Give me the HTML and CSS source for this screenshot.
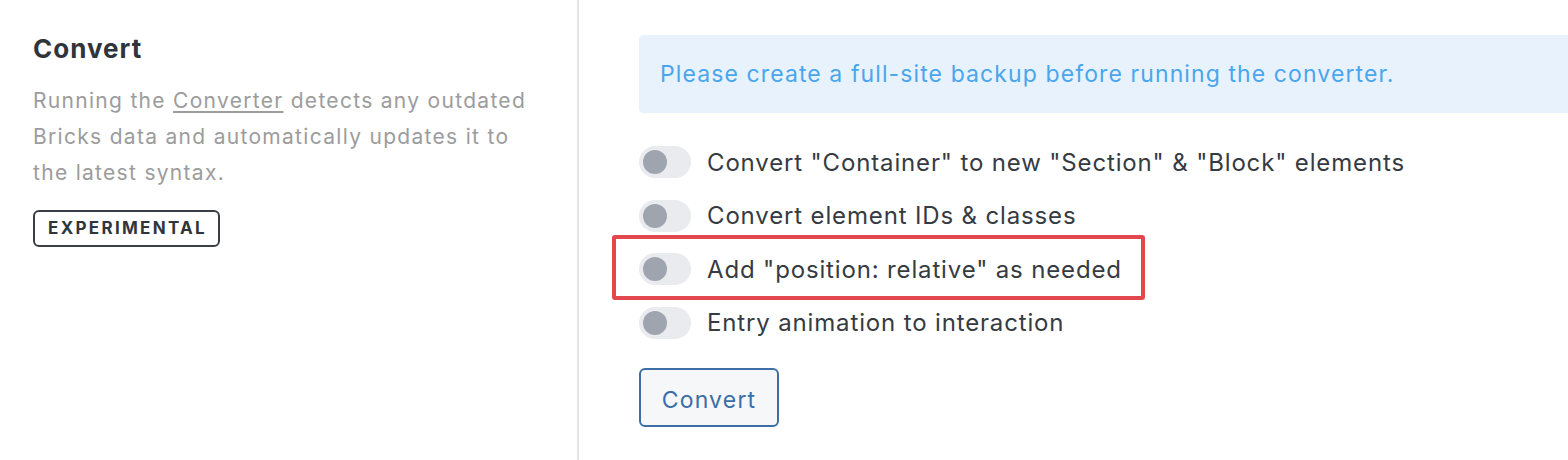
FILE: index.html
```html
<!DOCTYPE html>
<html>
<head>
<meta charset="utf-8">
<link rel="stylesheet" href="styles.css">
</head>
<body>
<div class="page">
  <div class="side">
    <h2 class="title">Convert</h2>
    <p class="desc">Running the <a class="link" href="#">Converter</a> detects any outdated Bricks data and automatically updates it to the latest syntax.</p>
    <span class="badge">EXPERIMENTAL</span>
  </div>
  <div class="main">
    <div class="notice">Please create a full-site backup before running the converter.</div>
    <ul class="options">
      <li class="option"><span class="toggle"><span class="knob"></span></span><span class="label">Convert "Container" to new "Section" &amp; "Block" elements</span></li>
      <li class="option"><span class="toggle"><span class="knob"></span></span><span class="label">Convert element IDs &amp; classes</span></li>
      <li class="option highlighted"><span class="toggle"><span class="knob"></span></span><span class="label">Add "position: relative" as needed</span><span class="highlight"></span></li>
      <li class="option"><span class="toggle"><span class="knob"></span></span><span class="label">Entry animation to interaction</span></li>
    </ul>
    <button class="btn">Convert</button>
  </div>
</div>
</body>
</html>
```

FILE: styles.css
```css
* { box-sizing: border-box; }
html, body { margin: 0; padding: 0; background: #fff; }
body { font-family: Inter, "Noto Sans", sans-serif; width: 1568px; height: 460px; overflow: hidden; }
.page { display: flex; height: 460px; }
.side { width: 579px; flex: none; border-right: 2px solid #e3e3e3; padding: 33px 0 0 33px; }
.title { margin: 0; font-size: 26px; font-weight: 700; color: #30353b; line-height: 32px; letter-spacing: 1px; }
.desc { margin: 18px 0 0; font-size: 21px; line-height: 36px; color: #9c9c9c; width: 515px; letter-spacing: 1.3px; }
.link { color: #9c9c9c; text-decoration: underline; text-underline-offset: 3px; }
.badge { display: inline-block; margin-top: 19px; border: 2px solid #3a3f45; border-radius: 6px; padding: 4px 11px 5px 13px; font-size: 17px; font-weight: 700; color: #30353b; letter-spacing: 2.3px; line-height: 24px; }
.main { flex: 1; padding: 35px 0 0 60px; }
.notice { background: #e8f2fd; border-radius: 4px 0 0 4px; height: 78px; display: flex; align-items: center; padding-left: 21px; font-size: 23px; color: #4aa6ec; letter-spacing: 1.1px; }
.options { list-style: none; margin: 33px 0 0; padding: 0; display: flex; flex-direction: column; gap: 21.5px; }
.option { display: flex; align-items: center; height: 32px; position: relative; }
.toggle { width: 52px; height: 32px; border-radius: 16px; background: #e9ebef; display: flex; align-items: center; padding-left: 4px; flex: none; }
.knob { width: 24px; height: 24px; border-radius: 50%; background: #9ea5ae; }
.label { margin-left: 16px; font-size: 24px; color: #363b42; letter-spacing: 0.85px; }
.highlight { position: absolute; left: -27px; top: -18px; width: 533px; height: 65px; border: 4px solid #e2474d; border-radius: 3px; pointer-events: none; }
.btn { margin-top: 29px; width: 140px; height: 59px; border: 2px solid #3d6fa6; border-radius: 6px; background: #f5f7f8; color: #3a6ea8; font-family: Inter, "Noto Sans", sans-serif; font-size: 23px; letter-spacing: 1.2px; padding: 5px 0 0; }
```
